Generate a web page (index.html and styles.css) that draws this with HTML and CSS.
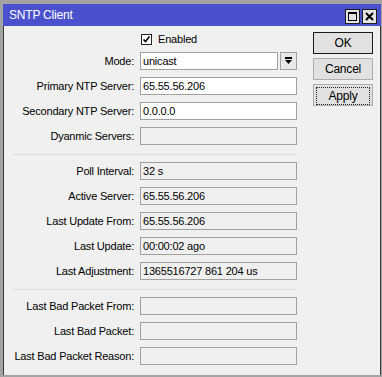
FILE: index.html
```html
<!DOCTYPE html>
<html lang="en">
<head>
    <meta charset="UTF-8">
    <title>SNTP Client</title>
    <link rel="stylesheet" href="styles.css">
</head>
<body>
    <div class="window">
        <div class="titlebar">
            <span class="title">SNTP Client</span>
            <div class="title-btns">
                <span class="tbtn"><svg width="11" height="11" viewBox="0 0 11 11"><rect x="1.5" y="1.5" width="8" height="8" fill="none" stroke="#000"/><rect x="1" y="1" width="9" height="2" fill="#000"/></svg></span>
                <span class="tbtn"><svg width="11" height="11" viewBox="0 0 11 11"><path d="M2 2 L9 9 M9 2 L2 9" stroke="#000" stroke-width="2"/></svg></span>
            </div>
        </div>
        <div class="panel">
            <div class="form">
                <div class="row check-row">
                    <span class="label"></span>
                    <label class="check">
                        <span class="box"><svg width="9" height="9" viewBox="0 0 9 9"><path d="M1.5 4.5 L3.5 6.5 L7.5 1.5" fill="none" stroke="#000" stroke-width="1.6"/></svg></span>
                        Enabled
                    </label>
                </div>
                <div class="row">
                    <span class="label">Mode:</span>
                    <div class="select">
                        <span class="field">unicast</span>
                        <span class="drop"><svg width="9" height="9" viewBox="0 0 9 9"><rect x="1" y="0" width="7" height="2" fill="#000"/><path d="M1 3 H8 L4.5 7 Z" fill="#000"/></svg></span>
                    </div>
                </div>
                <div class="row">
                    <span class="label">Primary NTP Server:</span>
                    <span class="field">65.55.56.206</span>
                </div>
                <div class="row">
                    <span class="label">Secondary NTP Server:</span>
                    <span class="field">0.0.0.0</span>
                </div>
                <div class="row">
                    <span class="label">Dyanmic Servers:</span>
                    <span class="field ro"></span>
                </div>

                <div class="sep"></div>

                <div class="row">
                    <span class="label">Poll Interval:</span>
                    <span class="field ro">32 s</span>
                </div>
                <div class="row">
                    <span class="label">Active Server:</span>
                    <span class="field ro">65.55.56.206</span>
                </div>
                <div class="row">
                    <span class="label">Last Update From:</span>
                    <span class="field ro">65.55.56.206</span>
                </div>
                <div class="row">
                    <span class="label">Last Update:</span>
                    <span class="field ro">00:00:02 ago</span>
                </div>
                <div class="row">
                    <span class="label">Last Adjustment:</span>
                    <span class="field ro">1365516727 861 204 us</span>
                </div>

                <div class="sep"></div>

                <div class="row">
                    <span class="label">Last Bad Packet From:</span>
                    <span class="field ro"></span>
                </div>
                <div class="row">
                    <span class="label">Last Bad Packet:</span>
                    <span class="field ro"></span>
                </div>
                <div class="row">
                    <span class="label">Last Bad Packet Reason:</span>
                    <span class="field ro"></span>
                </div>
            </div>

            <div class="buttons">
                <button class="btn default">OK</button>
                <button class="btn">Cancel</button>
                <button class="btn focused"><span>Apply</span></button>
            </div>
        </div>
    </div>
</body>
</html>
```

FILE: styles.css
```css
body {
    margin: 0;
    background-color: #a3a3a3;
    font-family: "Liberation Sans", Arial, sans-serif;
    font-size: 11px;
    letter-spacing: -0.2px;
    color: #000;
}
.window {
    margin: 4px 1px 0 3px;
    width: 378px;
    height: 371px;
    display: flex;
    flex-direction: column;
}
.titlebar {
    height: 22px;
    background-color: #4b50cc;
    display: flex;
    align-items: center;
    justify-content: space-between;
    padding: 0 4px 0 6px;
}
.title {
    color: #fff;
    font-size: 12px;
}
.title-btns {
    display: flex;
    gap: 2px;
    margin-top: 2px;
}
.tbtn {
    width: 13px;
    height: 13px;
    border: 1px solid #1e1e1e;
    background-color: #e3e3e3;
    display: flex;
    align-items: center;
    justify-content: center;
}
.panel {
    flex: 1;
    background-color: #f0f0f0;
    border-left: 1px solid #3a3a3a;
    border-right: 1px solid #3a3a3a;
    display: flex;
    gap: 16px;
}
.form {
    width: 293px;
    padding-top: 7px;
    display: flex;
    flex-direction: column;
    gap: 7px;
}
.row {
    display: flex;
    align-items: center;
    gap: 6px;
    height: 18px;
}
.check-row {
    height: 12px;
}
.label {
    width: 130px;
    text-align: right;
    white-space: nowrap;
}
.field {
    box-sizing: border-box;
    width: 157px;
    height: 18px;
    border: 1px solid #a0a0a0;
    background-color: #fff;
    padding: 0 2px;
    line-height: 16px;
    white-space: nowrap;
    overflow: hidden;
}
.field.ro {
    background-color: #f0f0f0;
}
.select {
    display: flex;
    gap: 2px;
}
.select .field {
    width: 138px;
}
.drop {
    box-sizing: border-box;
    width: 17px;
    height: 18px;
    border: 1px solid #a0a0a0;
    background-color: #e8e8e8;
    display: flex;
    align-items: center;
    justify-content: center;
}
.check {
    display: flex;
    align-items: center;
    gap: 6px;
    margin-left: 1px;
}
.box {
    box-sizing: border-box;
    width: 11px;
    height: 11px;
    border: 1px solid #222;
    background-color: #fff;
    display: flex;
    align-items: center;
    justify-content: center;
}
.sep {
    height: 1px;
    margin: 2px 0 0 9px;
    background-color: #d9d9d9;
}
.buttons {
    padding-top: 6px;
    display: flex;
    flex-direction: column;
    gap: 4px;
}
.btn {
    box-sizing: border-box;
    width: 60px;
    height: 22px;
    border: 1px solid #adadad;
    background-color: #e1e1e1;
    font-family: inherit;
    font-size: 12px;
    letter-spacing: -0.2px;
    color: #000;
    padding: 0;
}
.btn.default {
    border-color: #1a1a1a;
}
.btn.focused {
    padding: 2px;
}
.btn.focused span {
    display: block;
    height: 16px;
    line-height: 16px;
    border: 1px dotted #222;
}
```
